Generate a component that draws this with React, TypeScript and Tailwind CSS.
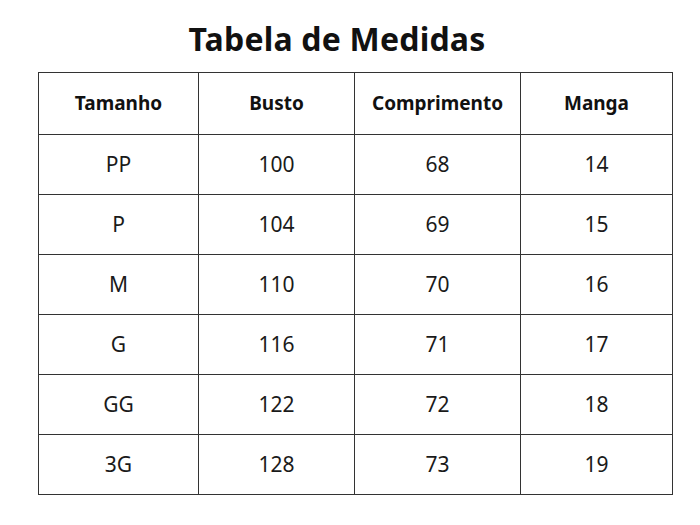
import React from "react";

const rows = [
  ["PP", "100", "68", "14"],
  ["P", "104", "69", "15"],
  ["M", "110", "70", "16"],
  ["G", "116", "71", "17"],
  ["GG", "122", "72", "18"],
  ["3G", "128", "73", "19"],
];

const widths = ["w-[160px]", "w-[156px]", "w-[166px]", "w-[152px]"];

export default function App() {
  return (
    <div className="w-[700px] h-[525px] bg-white text-[#111] font-['Noto_Sans',sans-serif] pl-[38px] pt-[17px]">
      <h1 className="w-[598px] text-center text-[32px] leading-[44px] font-bold tracking-[0.2px]">
        Tabela de Medidas
      </h1>
      <table className="mt-[11px] border-collapse table-fixed w-[635px]">
        <thead>
          <tr className="h-[62px]">
            {["Tamanho", "Busto", "Comprimento", "Manga"].map((h, i) => (
              <th
                key={h}
                className={`${widths[i]} border border-[#333] text-[19px] font-bold text-center align-middle`}
              >
                {h}
              </th>
            ))}
          </tr>
        </thead>
        <tbody>
          {rows.map((r, ri) => (
            <tr key={ri} className="h-[60px]">
              {r.map((c, ci) => (
                <td
                  key={ci}
                  className="border border-[#333] text-[21px] font-normal text-[#1a1a1a] text-center align-middle"
                >
                  {c}
                </td>
              ))}
            </tr>
          ))}
        </tbody>
      </table>
    </div>
  );
}
